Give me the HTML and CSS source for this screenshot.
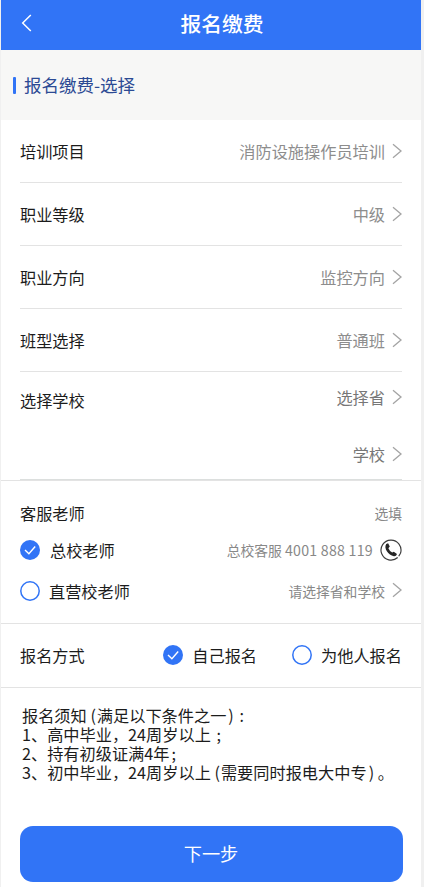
FILE: index.html
```
<!DOCTYPE html>
<html lang="zh-CN">
<head>
<meta charset="utf-8">
<title>报名缴费</title>
<link rel="stylesheet" href="styles.css">
</head>
<body>
<svg class="defs" width="0" height="0" aria-hidden="true">
  <symbol id="chevron" viewBox="0 0 10 16"><path d="M1 1.2 9 8 1 14.8" fill="none" stroke="#a4a4a4" stroke-width="1.3"/></symbol>
  <symbol id="checked" viewBox="0 0 20 20"><circle cx="10" cy="10" r="10" fill="#3174f6"/><path d="M5 10 8.9 13.8 15.2 6.5" fill="none" stroke="#fff" stroke-width="1.4"/></symbol>
  <symbol id="unchecked" viewBox="0 0 20 20"><circle cx="10" cy="10" r="9.2" fill="#fff" stroke="#3174f6" stroke-width="1.5"/></symbol>
</svg>
<div class="page">
  <header class="bar">
    <svg class="back" viewBox="0 0 10 18"><path d="M9.3 1 1.2 9 9.3 17" fill="none" stroke="#fff" stroke-width="1.5"/></svg>
    <h1>报名缴费</h1>
  </header>
  <div class="section"><i class="mark"></i><h2>报名缴费-选择</h2></div>
  <main>
    <div class="row"><span class="label">培训项目</span><span class="value">消防设施操作员培训</span><svg class="chev"><use href="#chevron"/></svg></div>
    <div class="row"><span class="label">职业等级</span><span class="value">中级</span><svg class="chev"><use href="#chevron"/></svg></div>
    <div class="row"><span class="label">职业方向</span><span class="value">监控方向</span><svg class="chev"><use href="#chevron"/></svg></div>
    <div class="row"><span class="label">班型选择</span><span class="value">普通班</span><svg class="chev"><use href="#chevron"/></svg></div>
    <div class="school">
      <span class="label">选择学校</span>
      <div class="picks">
        <div class="pick"><span class="value dark">选择省</span><svg class="chev"><use href="#chevron"/></svg></div>
        <div class="pick"><span class="value dark">学校</span><svg class="chev"><use href="#chevron"/></svg></div>
      </div>
    </div>
    <section class="teachers">
      <div class="line head"><span class="label">客服老师</span><span class="hint">选填</span></div>
      <div class="line first"><svg class="radio"><use href="#checked"/></svg><span class="label">总校老师</span><span class="hint hotline">总校客服<span class="number">4001 888 119</span></span>
        <svg class="phone" viewBox="0 0 22 22"><path d="M17.7 18.5A10 10 0 1 1 20.5 14.2L18.7 17.2" fill="none" stroke="#3c3c3c" stroke-width="1.15"/><path d="M6.2 5.1 8.1 4.3 9.8 7.6 8.4 9.2Q9.4 11.9 12.2 13.6L13.8 12.7 17 15.1Q16.2 17.6 13.9 17.3C8.3 16.3 3.4 9.2 6.2 5.1Z" fill="#262626"/></svg>
      </div>
      <div class="line second"><svg class="radio"><use href="#unchecked"/></svg><span class="label">直营校老师</span><span class="hint pickhint">请选择省和学校</span><svg class="chev"><use href="#chevron"/></svg></div>
    </section>
    <section class="mode">
      <span class="label">报名方式</span>
      <svg class="radio"><use href="#checked"/></svg><span class="label option">自己报名</span>
      <svg class="radio other"><use href="#unchecked"/></svg><span class="label option">为他人报名</span>
    </section>
    <p class="notice">报名须知 (<span class="cond">满足以下条件之一</span>) <span class="end">:</span><br>1、高中毕业，24周岁以上 <span class="end">;</span><br>2、持有初级证满4年<span class="end">;</span><br>3、初中毕业，24周岁以上 (<span class="cond">需要同时报电大中专</span>) 。</p>
    <button class="next">下一步</button>
  </main>
</div>
</body>
</html>
```
FILE: styles.css
```
* { box-sizing: border-box; }
body { margin: 0; background: #f0f0f0; font-family: "Noto Sans CJK SC", sans-serif; color: #1c1c1c; }
h1, h2, p { margin: 0; font-weight: 400; }
svg { display: block; flex: none; }
.defs { position: absolute; }
.page { width: 420px; height: 887px; margin-left: 1px; background: #fff; overflow: hidden; }
.bar { height: 50px; padding: 0 20px; background: #3174f6; display: grid; grid-template-columns: 10px 1fr; align-items: center; color: #fff; }
.back { width: 11px; height: 18px; margin-top: -4px; }
h1 { font-size: 20.8px; line-height: 30px; text-align: center; margin: -4px 0 0 12px; font-weight: 500; }
.section { height: 70px; padding-left: 12px; background: #f7f7f6; display: flex; align-items: center; }
.mark { width: 3px; height: 17px; border-radius: 1px; background: #3174f6; }
h2 { margin-left: 8px; font-size: 17.5px; line-height: 26px; color: #2c4a94; }
.row { height: 63.1px; margin: 0 19px; border-bottom: 1px solid #e3e3e3; display: flex; align-items: center; }
.label { font-size: 16.2px; line-height: 24px; white-space: nowrap; }
.value { margin-left: auto; font-size: 16.2px; line-height: 24px; color: #8d8d8d; }
.value.dark { color: #777; }
.chev { width: 10px; height: 16px; margin-left: 7px; margin-top: -1px; }
.school { height: 107.4px; margin: 0 19px; border-bottom: 1px solid #dcdfde; display: flex; justify-content: space-between; padding-top: 13px; }
.school > .label { margin-top: 3px; }
.pick { height: 24px; display: flex; align-items: center; margin-bottom: 33px; }
.teachers { height: 144px; border-top: 1px solid #e3e3e3; border-bottom: 1px solid #e3e3e3; padding: 20px 19px 0; }
.line { display: flex; align-items: center; height: 24px; }
.hint { margin-left: auto; font-size: 13.8px; line-height: 20px; color: #888; white-space: nowrap; }
.first { margin-top: 13px; }
.second { margin-top: 17px; }
.radio { width: 20px; height: 20px; }
.radio + .label { margin-left: 10px; }
.second .radio + .label { margin-left: 9px; }
.number { margin-left: 3px; font-size: 14.2px; letter-spacing: 0.25px; }
.phone { width: 22px; height: 22px; margin-left: 7px; }
.mode { height: 64px; border-bottom: 1px solid #e3e3e3; padding: 0 19px; display: flex; align-items: center; }
.mode .radio { margin-left: auto; }
.mode .radio.other { margin-left: 35px; }
.mode .radio + .label { margin-left: 9px; }
.notice { padding: 18px 0 0 21px; height: 138px; font-size: 16.2px; line-height: 19.2px; white-space: nowrap; }
.cond { margin: 0 2px 0 1px; }
.end { margin-left: 2px; }
.next { display: block; width: 383px; height: 56px; margin-left: 18.5px; padding: 0; border: 0; border-radius: 13px; background: #3174f6; color: #fff; font: 18.2px/27px "Noto Sans CJK SC", sans-serif; }
```
